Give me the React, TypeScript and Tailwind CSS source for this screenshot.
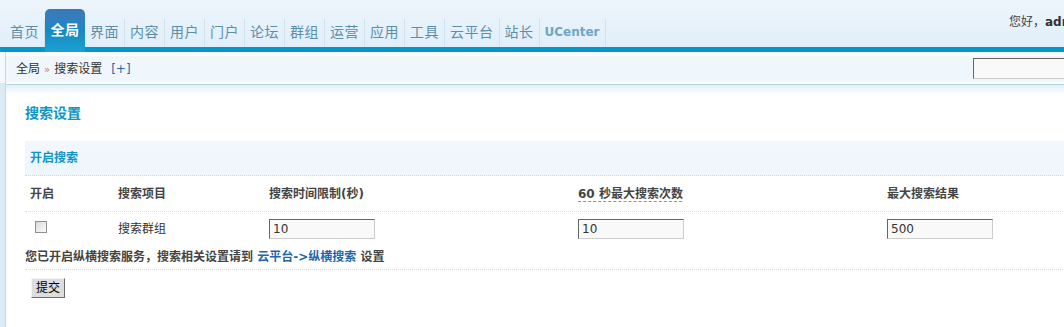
const navItems = ["首页", "全局", "界面", "内容", "用户", "门户", "论坛", "群组", "运营", "应用", "工具", "云平台", "站长", "UCenter"];

const cols = [
  "w-[88px] shrink-0",
  "w-[151px] shrink-0",
  "w-[309px] shrink-0",
  "w-[309px] shrink-0",
  "w-[309px] shrink-0",
];

function TextBox({ value }: { value: string }) {
  return (
    <div className="w-[106px] h-[20px] bg-[#f9f9f9] border border-[#ccc] border-t-[#666] border-l-[#666] pl-[3px] text-[12px] leading-[18px] text-[#333]">
      {value}
    </div>
  );
}

export default function App() {
  return (
    <div
      className="w-[1064px] h-[327px] overflow-hidden bg-white text-[12px] text-[#333]"
      style={{ fontFamily: '"DejaVu Sans", "Noto Sans CJK SC", sans-serif' }}
    >
      {/* header */}
      <div className="relative h-[47px] bg-gradient-to-b from-[#edf5fc] to-[#e1eef9]">
        <div className="absolute top-[13px] left-[1009px] whitespace-nowrap text-[12px] text-[#444]">
          您好，<b className="text-[#333]">admin</b>
        </div>
        <div className="flex pt-[19px] pl-[5px] h-[47px]">
          {navItems.map((n) =>
            n === "全局" ? (
              <div key={n} className="relative -mt-[10px] h-[43px] w-[40px] shrink-0 rounded-t-[5px] bg-gradient-to-b from-[#3c78b8] via-[#1689c3] to-[#1ba2d2] text-white font-bold text-[14px] tracking-[0.5px] text-center leading-[43px] z-10">
                {n}
              </div>
            ) : (
              <div
                key={n}
                className={`h-[28px] shrink-0 px-[5px] border-r border-[#d0e2ee] leading-[26px] whitespace-nowrap ${
                  n === "UCenter" ? "text-[12px] font-bold text-[#6fa6c3]" : "text-[14px] tracking-[0.5px] text-[#5b8fa9]"
                }`}
              >
                {n}
              </div>
            )
          )}
        </div>
      </div>
      <div className="h-[5px] bg-[#0098ca]" />

      <div className="flex h-[275px]">
        {/* left strip */}
        <div className="w-[6px] shrink-0 flex flex-col border-r border-[#c3d9e6]">
          <div className="h-[31px] bg-[#f3f9fc]" />
          <div className="flex-1 bg-[#dbebf6]" />
        </div>

        <div className="flex-1 min-w-0">
          {/* breadcrumb */}
          <div className="h-[32px] border-t-[4px] border-[#fbfdff] bg-[#f0f7fc] flex items-center border-b-[2px] border-b-white">
            <div className="pl-[10px] flex items-center text-[12px] text-[#333] shrink-0">
              <span>全局</span>
              <span className="mx-[4px] text-[10px] text-[#d08040]">»</span>
              <span>搜索设置</span>
              <span className="ml-[9px] text-[#2466b0]">[+]</span>
            </div>
            <div className="flex-1" />
            <div className="shrink-0 mr-[-20px] w-[111px] h-[21px] mt-[-2px] bg-[#f9f9f9] border border-[#ccc] border-t-[#666] border-l-[#666]" />
          </div>
          <div className="h-[1px] bg-[#b5d5e2]" />
          <div className="h-[10px] bg-gradient-to-b from-[#e4eff6] to-white" />

          {/* content */}
          <div className="pl-[19px]">
            <h3 className="mt-[8px] h-[38px] text-[14px] font-bold text-[#0d95c8]">
              搜索设置
            </h3>

            <div className="w-[1100px]">
              <div className="h-[35px] bg-gradient-to-b from-[#f3f8fd] to-[#eef5fc] border-b border-dotted border-[#bfe0f0] pl-[5px] flex items-center font-bold text-[#0e95c8]">
                开启搜索
              </div>
              <div className="flex h-[36px] items-center border-b border-dotted border-[#c6e2f2] font-bold text-[#444]">
                <div className={`${cols[0]} pl-[5px]`}>开启</div>
                <div className={`${cols[1]} pl-[5px]`}>搜索项目</div>
                <div className={`${cols[2]} pl-[5px]`}>搜索时间限制(秒)</div>
                <div className={`${cols[3]} pl-[5px]`}>
                  <span className="underline decoration-dashed decoration-[#e07070] underline-offset-[3px]">60 秒最大搜索次数</span>
                </div>
                <div className={`${cols[4]} pl-[5px]`}>最大搜索结果</div>
              </div>
              <div className="flex h-[33px] items-center">
                <div className={`${cols[0]} pl-[10px]`}>
                  <div className="w-[12px] h-[12px] -mt-[3px] border border-[#8f8f8f] bg-gradient-to-br from-[#dcdcdc] to-[#fafafa]" />
                </div>
                <div className={`${cols[1]} pl-[5px]`}>搜索群组</div>
                <div className={`${cols[2]} pl-[5px]`}>
                  <TextBox value="10" />
                </div>
                <div className={`${cols[3]} pl-[5px]`}>
                  <TextBox value="10" />
                </div>
                <div className={`${cols[4]} pl-[5px]`}>
                  <TextBox value="500" />
                </div>
              </div>
              <div className="h-[25px] flex items-center border-b border-dotted border-[#c6e2f2] font-bold text-[#444]">
                您已开启纵横搜索服务，搜索相关设置请到&nbsp;<span className="text-[#2366a8]">云平台-&gt;纵横搜索</span>&nbsp;设置
              </div>
              <div className="pt-[8px] pl-[6px]">
                <button className="w-[34px] h-[20px] bg-[#dddddd] border border-[#f5f5f5] border-r-[#6a6a6a] border-b-[#6a6a6a] text-[12px] leading-[16px] text-black">
                  提交
                </button>
              </div>
            </div>
          </div>
        </div>
      </div>
    </div>
  );
}
